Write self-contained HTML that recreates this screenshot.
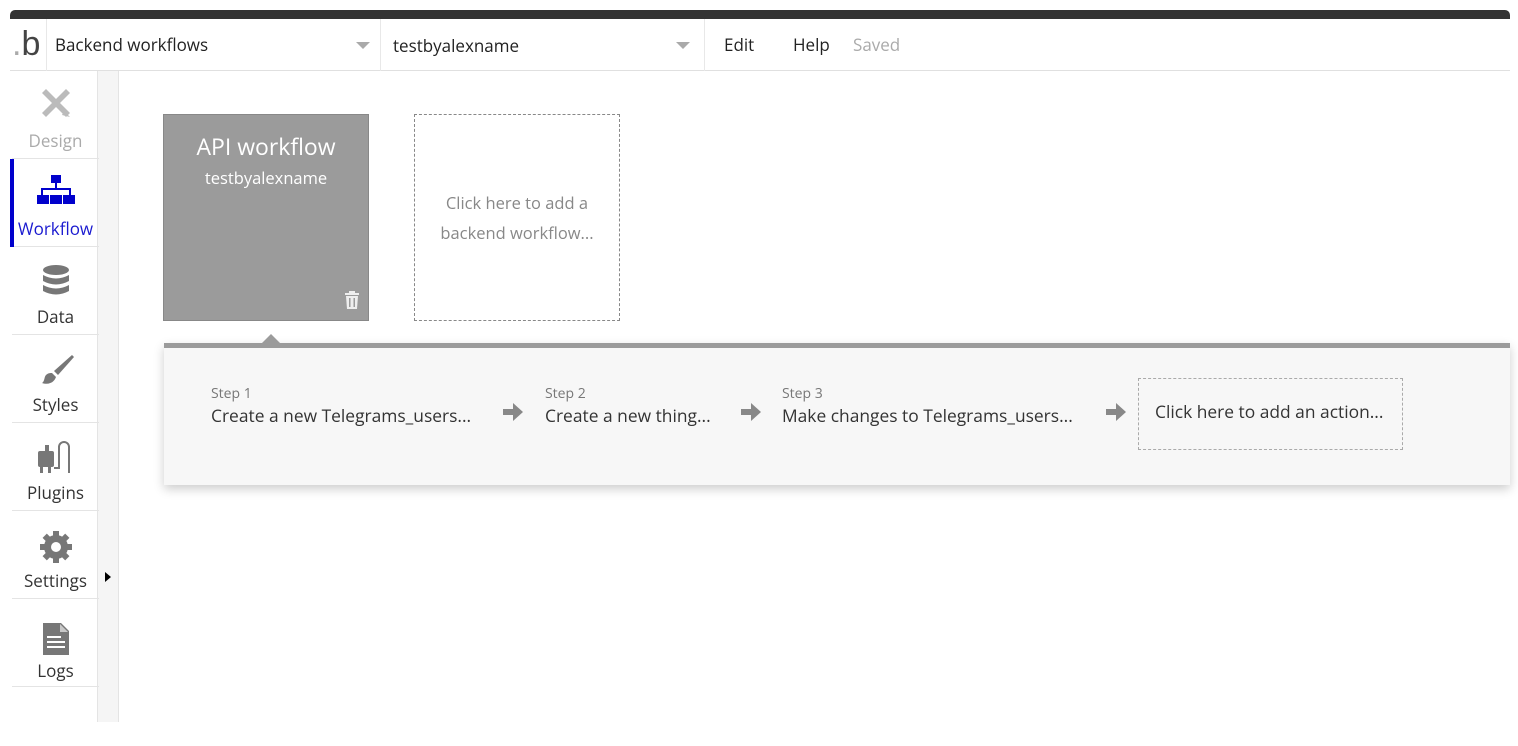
<!DOCTYPE html>
<html><head><style>
*{margin:0;padding:0;box-sizing:border-box}
body{width:1518px;height:746px;background:#fff;position:relative;overflow:hidden;font-family:"Open Sans","Liberation Sans",sans-serif;color:#333}
.abs{position:absolute}
.side{position:absolute;left:12px;width:87px;text-align:center;font-size:17px;color:#333;border-bottom:1px solid #e4e4e4;height:88px}
.side svg{display:block;margin:0 auto}
.step{position:absolute;top:384px}
.step .l{font-size:14px;color:#777}
.step .t{font-size:17.4px;color:#333;margin-top:1px;white-space:nowrap}
.arrow{position:absolute;top:401px}
</style></head><body>
<div class="abs" style="left:10px;top:10px;width:1500px;height:9px;background:#333;border-radius:5px 5px 0 0"></div>
<div class="abs" style="left:10px;top:19px;width:1500px;height:52px;border-bottom:1px solid #e0e0e0"></div>
<div class="abs" style="left:12px;top:22px;font-size:34px;color:#444;line-height:44px;font-family:'Liberation Sans',sans-serif"><span style="color:#aaa">.</span>b</div>
<div class="abs" style="left:46px;top:19px;width:1px;height:52px;background:#e8e8e8"></div>
<div class="abs" style="left:55px;top:33px;font-size:17px;color:#222">Backend workflows</div>
<div class="abs" style="left:356px;top:42px;width:0;height:0;border-left:7px solid transparent;border-right:7px solid transparent;border-top:7px solid #aaa"></div>
<div class="abs" style="left:380px;top:19px;width:1px;height:52px;background:#e8e8e8"></div>
<div class="abs" style="left:393px;top:34px;font-size:17px;color:#222">testbyalexname</div>
<div class="abs" style="left:676px;top:42px;width:0;height:0;border-left:7px solid transparent;border-right:7px solid transparent;border-top:7px solid #aaa"></div>
<div class="abs" style="left:704px;top:19px;width:1px;height:52px;background:#e8e8e8"></div>
<div class="abs" style="left:724px;top:33px;font-size:17px;color:#222">Edit</div>
<div class="abs" style="left:793px;top:33px;font-size:17px;color:#222">Help</div>
<div class="abs" style="left:853px;top:33px;font-size:17px;color:#aaa">Saved</div>
<div class="abs" style="left:97px;top:71px;width:22px;height:651px;background:#f5f5f5;border-left:1px solid #e4e4e4;border-right:1px solid #e4e4e4"></div>
<div class="abs" style="left:10px;top:71px;width:87px;height:651px;"></div>
<div class="side" style="top:71px;color:#aaa;height:88px">
<svg width="36" height="36" viewBox="0 0 36 36" style="margin-top:14px"><g fill="#bbb"><path d="M4 8l4-4 24 24-4 4z"/><path d="M28 4l4 4-24 24-4-4z"/><path d="M26 26l6 6-8-2z"/></g></svg>
<div style="margin-top:8px">Design</div></div>
<div class="side" style="top:159px;color:#1a1ad0">
<div class="abs" style="left:-2px;top:0;width:4px;height:88px;background:#0000cc"></div>
<svg width="42" height="36" viewBox="0 0 42 36" style="margin-top:14px"><g fill="#0000cc"><rect x="16" y="2" width="10" height="8"/><rect x="20" y="10" width="2" height="6"/><rect x="6" y="15" width="30" height="2"/><rect x="6" y="15" width="2" height="7"/><rect x="34" y="15" width="2" height="7"/><rect x="2" y="22" width="12" height="9"/><rect x="15" y="22" width="12" height="9"/><rect x="28" y="22" width="12" height="9"/></g></svg>
<div style="margin-top:8px">Workflow</div></div>
<div class="side" style="top:247px">
<svg width="30" height="36" viewBox="0 0 30 36" style="margin-top:16px"><g fill="#777"><ellipse cx="15" cy="7" rx="13" ry="5"/><path d="M2 12q13 7 26 0v6q-13 7-26 0z"/><path d="M2 22q13 7 26 0v6q-13 7-26 0z"/></g></svg>
<div style="margin-top:6px">Data</div></div>
<div class="side" style="top:335px">
<svg width="40" height="40" viewBox="0 0 40 40" style="margin-top:16px"><g fill="#777"><path d="M36 4l2 2-16 18-4-4z"/><path d="M16 22l4 4c-2 6-8 8-14 6 3-2 2-6 4-8s4-2 6-2z"/></g></svg>
<div style="margin-top:2px">Styles</div></div>
<div class="side" style="top:423px">
<svg width="40" height="40" viewBox="0 0 40 40" style="margin-top:16px"><g fill="#777"><rect x="2" y="12" width="16" height="16" rx="2"/><rect x="4" y="28" width="3" height="6"/><rect x="12" y="28" width="3" height="6"/><rect x="9" y="6" width="4" height="6"/><path d="M18 30h6V8a4 4 0 0 1 8 0v26h2V8a6 6 0 0 0-12 0v20h-4z"/></g></svg>
<div style="margin-top:2px">Plugins</div></div>
<div class="side" style="top:511px">
<svg width="40" height="40" viewBox="0 0 40 40" style="margin-top:16px"><g fill="#777"><circle cx="20" cy="20" r="12"/><g stroke="#777" stroke-width="6"><path d="M20 4v32M4 20h32M8.7 8.7l22.6 22.6M31.3 8.7L8.7 31.3"/></g><circle cx="20" cy="20" r="5" fill="#fff"/></g></svg>
<div style="margin-top:2px">Settings</div></div>
<div class="abs" style="left:105px;top:572px;width:0;height:0;border-top:5px solid transparent;border-bottom:5px solid transparent;border-left:6px solid #000"></div>
<div class="side" style="top:599px">
<svg width="30" height="36" viewBox="0 0 30 36" style="margin-top:22px"><path fill="#777" d="M2 2h18l8 8v24H2z"/><path fill="#fff" d="M19 3v8h8" opacity=".6"/><g fill="#fff"><rect x="6" y="15" width="14" height="2"/><rect x="6" y="20" width="18" height="2"/><rect x="6" y="25" width="18" height="2"/></g></svg>
<div style="margin-top:2px">Logs</div></div>
<div class="abs" style="left:163px;top:114px;width:206px;height:207px;background:#9b9b9b;border:1px solid #888;color:#fff;text-align:center">
<div style="font-size:23px;margin-top:15px">API workflow</div>
<div style="font-size:16.5px;margin-top:4px">testbyalexname</div>
<svg class="abs" style="left:180px;top:176px" width="16" height="18" viewBox="0 0 16 18"><g fill="#eee"><rect x="1" y="2" width="14" height="2"/><rect x="5" y="0" width="6" height="2"/><path d="M2 5h12l-1 13H3z"/></g><g fill="#9b9b9b"><rect x="5" y="7" width="1.5" height="9"/><rect x="9.5" y="7" width="1.5" height="9"/></g></svg>
</div>
<div class="abs" style="left:414px;top:114px;width:206px;height:207px;border:1px dashed #888;color:#888;font-size:16.5px;text-align:center;line-height:30px;padding-top:73px">Click here to add a<br>backend workflow...</div>
<div class="abs" style="left:164px;top:343px;width:1346px;height:142px;background:#f7f7f7;border-top:5px solid #9b9b9b;box-shadow:0 4px 10px rgba(0,0,0,.2)"></div>
<div class="abs" style="left:262px;top:334px;width:0;height:0;border-left:9px solid transparent;border-right:9px solid transparent;border-bottom:9px solid #9b9b9b"></div>
<div class="step" style="left:211px"><div class="l">Step 1</div><div class="t">Create a new Telegrams_users...</div></div>
<div class="step" style="left:545px"><div class="l">Step 2</div><div class="t">Create a new thing...</div></div>
<div class="step" style="left:782px"><div class="l">Step 3</div><div class="t">Make changes to Telegrams_users...</div></div>
<svg class="arrow" style="left:502px" width="22" height="22" viewBox="0 0 22 22"><path fill="#888" d="M1 8h10V2l10 9-10 9v-6H1z"/></svg>
<svg class="arrow" style="left:740px" width="22" height="22" viewBox="0 0 22 22"><path fill="#888" d="M1 8h10V2l10 9-10 9v-6H1z"/></svg>
<svg class="arrow" style="left:1105px" width="22" height="22" viewBox="0 0 22 22"><path fill="#888" d="M1 8h10V2l10 9-10 9v-6H1z"/></svg>
<div class="abs" style="left:1138px;top:378px;width:265px;height:72px;border:1px dashed #aaa;font-size:17.4px;color:#333;padding:21px 0 0 16px;white-space:nowrap">Click here to add an action...</div>
</body></html>
